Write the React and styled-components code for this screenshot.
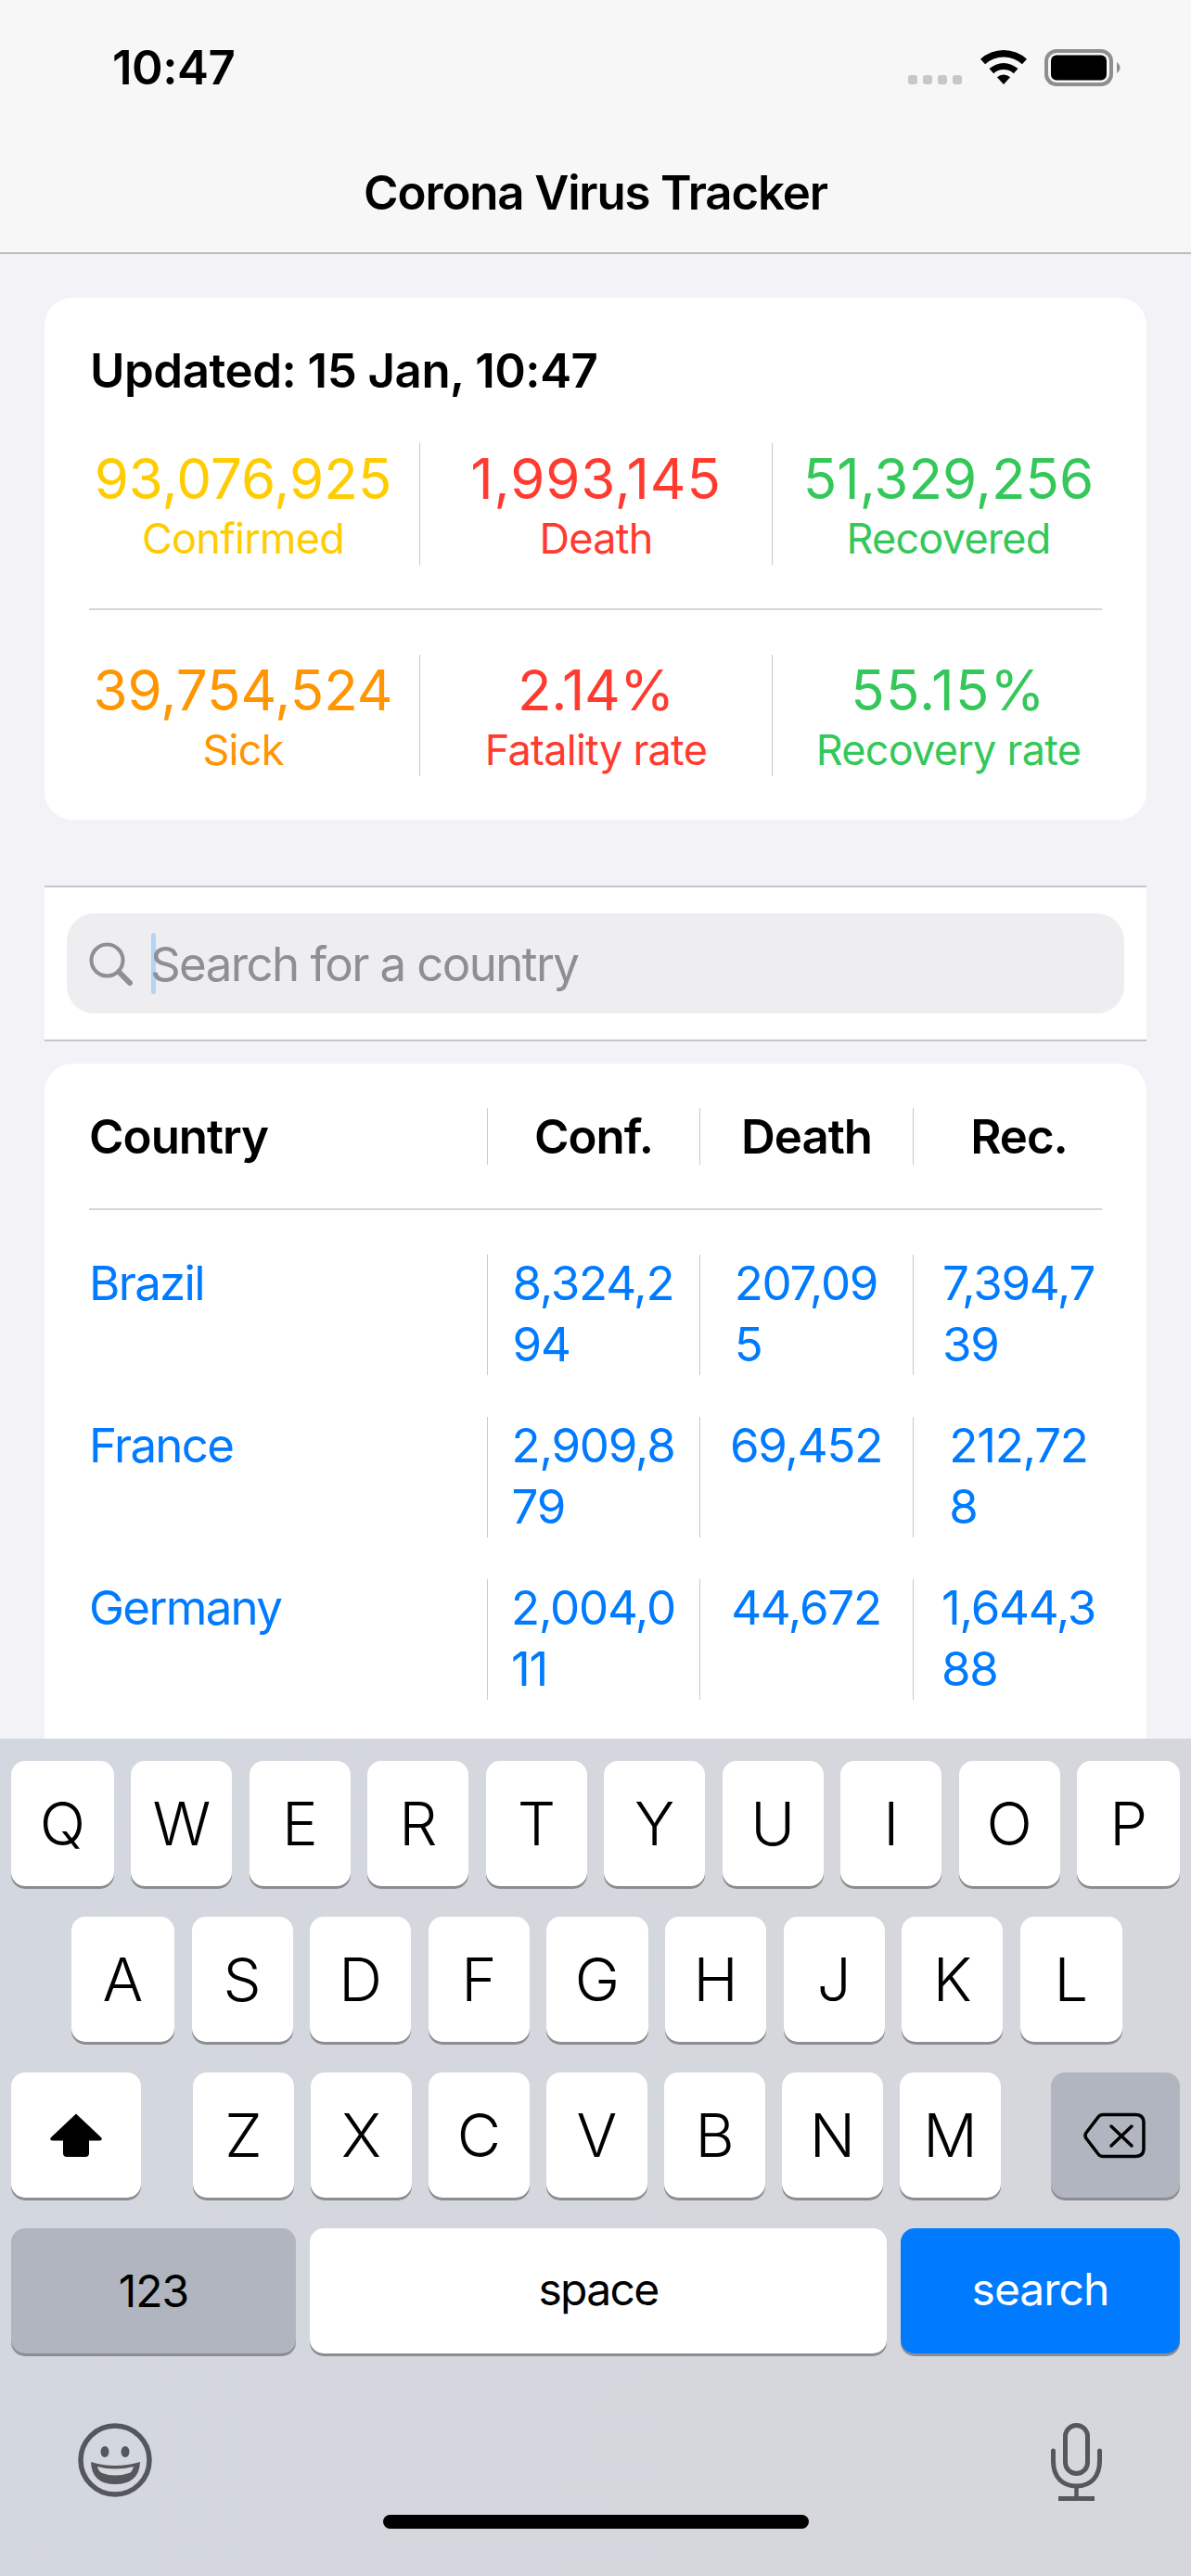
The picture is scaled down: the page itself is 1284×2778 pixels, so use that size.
import React from "react";
import styled, { createGlobalStyle } from "styled-components";

const Global = createGlobalStyle`
  html, body { margin: 0; padding: 0; background: #f2f2f7; }
  * { box-sizing: border-box; }
`;
const FONT = `Inter, "Noto Sans", "Liberation Sans", sans-serif`;

const Page = styled.div`
  width: 1284px; height: 2778px; display: flex; flex-direction: column; overflow: hidden;
  background: #f2f2f7; font-family: ${FONT}; color: #000;
`;
const NavBar = styled.header`
  flex: none; height: 274px; background: #f7f7f8; border-bottom: 2px solid #bcbcbe; display: flex; flex-direction: column;
`;
const StatusBar = styled.div`
  height: 144px; padding: 46px 76px 0 121px; display: flex; justify-content: space-between; align-items: flex-start;
`;
const Time = styled.div`
  font-size: 51px; line-height: 54px; font-weight: 600; letter-spacing: -0.5px;
`;
const StatusIcons = styled.div`
  display: flex; align-items: flex-start; margin-top: 7px;
`;
const Dots = styled.div`
  display: flex; gap: 6px; margin: 28px 20px 0 0;
`;
const Dot = styled.span`
  width: 10px; height: 10px; border-radius: 3px; background: #c7c7c7;
`;
const Title = styled.h1`
  margin: 0; font-size: 51px; line-height: 62px; font-weight: 600; text-align: center; letter-spacing: -1.15px; padding-top: 33px;
`;
const Content = styled.main`
  flex: 1; min-height: 0; overflow: hidden; padding: 47px 48px 0; display: flex; flex-direction: column;
`;
const Card = styled.section`
  flex: none; background: #fff; border-radius: 30px; padding: 48px 24px;
`;
const Updated = styled.div`
  font-size: 51px; line-height: 61px; font-weight: 600; padding-left: 25px; margin-bottom: 48px; letter-spacing: -0.5px;
`;
const StatsRow = styled.div`
  display: grid; grid-template-columns: repeat(3, 380px); height: 130px;
`;
const Stat = styled.div`
  text-align: center; color: ${(p) => p.$color}; padding-top: 1px;
  & + & { border-left: 1px solid #c9c9cc; }
`;
const StatValue = styled.div`
  font-size: 60px; line-height: 74px; font-weight: 400; letter-spacing: ${(p) => p.$ls || 0}px;
`;
const StatLabel = styled.div`
  font-size: 45px; line-height: 56px; letter-spacing: -0.75px;
`;
const Separator = styled.hr`
  margin: 48px 24px; border: 0; height: 2px; background: #d6d6d9;
`;
const SearchSection = styled.section`
  flex: none; margin-top: 71px; height: 168px; background: #fff;
  border-top: 2px solid #c6c6c9; border-bottom: 2px solid #c6c6c9; padding: 28px 24px;
`;
const SearchField = styled.div`
  height: 108px; border-radius: 30px; background: #eeeef0; display: flex; align-items: center; padding-left: 24px;
`;
const Caret = styled.span`
  width: 5px; height: 66px; margin: 0 -6px 0 20px; background: #b2d4f9; border-radius: 2px;
`;
const Placeholder = styled.span`
  font-size: 51px; line-height: 62px; color: #8e8e93; letter-spacing: -1.6px; padding-top: 2px;
`;
const TableCard = styled.section`
  flex: 1; margin-top: 24px; background: #fff; border-radius: 30px 30px 0 0; padding: 48px 24px 0 48px;
`;
const TableRow = styled.div`
  display: grid; grid-template-columns: 429px 229px 230px 228px; margin-bottom: ${(p) => p.$gap}px;
  height: ${(p) => p.$height}px;
`;
const HeadCell = styled.div`
  font-size: 51px; line-height: 61px; font-weight: 600; letter-spacing: -1px;
  text-align: ${(p) => (p.$first ? "left" : "center")};
  ${(p) => !p.$first && "border-left: 1px solid #c9c9cc;"}
`;
const TableRule = styled.hr`
  margin: 0 24px 48px 0; border: 0; height: 2px; background: #d6d6d9;
`;
const CountryCell = styled.a`
  font-size: 51px; line-height: 66px; color: #007aff; letter-spacing: -1.7px; margin-top: -2px;
`;
const NumCell = styled.div`
  border-left: 1px solid #c9c9cc; display: flex; justify-content: center; color: #007aff;
  font-size: 51px; line-height: 66px; letter-spacing: -1.25px;
`;
const NumText = styled.div`
  margin-top: -2px; margin-left: -1px;
`;

const Keyboard = styled.section`
  flex: none; height: 903px; background: linear-gradient(100deg, #d3d7df 0%, #d6d7dc 100%); padding-top: 24px; display: flex; flex-direction: column;
`;
const KeyRow = styled.div`
  display: flex; height: 138px; margin-bottom: 30px; padding: 0 ${(p) => p.$padR || 12}px 0 ${(p) => p.$padL || 12}px;
  gap: ${(p) => p.$gap || 18}px; justify-content: space-between;
`;
const Key = styled.div`
  flex: ${(p) => (p.$w ? `0 0 ${p.$w}px` : "1 1 0")}; height: 135px; border-radius: 15px;
  background: ${(p) => p.$bg || "#fff"}; color: ${(p) => p.$fg || "#000"};
  box-shadow: 0 3px 0 #8c8d91; display: flex; align-items: center; justify-content: center;
  padding-bottom: ${(p) => p.$lift || 0}px;
  font-size: ${(p) => p.$size || 65}px; font-weight: ${(p) => p.$weight || 300}; letter-spacing: ${(p) => p.$ls || 0}px;
`;
const Letters = styled.div`
  flex: 0 0 871px; display: flex; gap: 18px; margin-left: 2px;
`;
const BottomRow = styled.div`
  display: flex; justify-content: space-between; align-items: flex-start; padding: 42px 96px 0 84px; height: 121px;
`;
const HomeBar = styled.div`
  width: 459px; height: 15px; border-radius: 8px; background: #000; margin: 20px auto 0;
`;
const BottomArea = styled.div`
  flex: 1; display: flex; flex-direction: column;
`;

const Wifi = () => (
  <svg width="50" height="37" viewBox="0 0 50 37" style={{ marginRight: 19, marginTop: 1 }}>
    <path d="M0 9.8A37 37 0 0 1 50 9.8L44.9 15.3A29.5 29.5 0 0 0 5.1 15.3Z" />
    <path d="M9.5 20.1A23 23 0 0 1 40.5 20.1L35.8 25.2A16 16 0 0 0 14.2 25.2Z" />
    <path d="M17.9 29.3A10.5 10.5 0 0 1 32.1 29.3L25 37Z" />
  </svg>
);
const Battery = () => (
  <svg width="82" height="40" viewBox="0 0 82 40">
    <rect x="2" y="2" width="70" height="36" rx="11" fill="none" stroke="#8e8e8e" strokeWidth="4" />
    <rect x="7" y="6.500" width="60" height="27" rx="6" fill="#000" />
    <path d="M78 14 C80.500 16 81.500 18 81.500 20 C81.500 22 80.500 24 78 26Z" fill="#8e8e8e" />
  </svg>
);
const SearchGlyph = () => (
  <svg width="47" height="47" viewBox="0 0 47 47" fill="none" stroke="#8e8e93">
    <circle cx="19.500" cy="19.500" r="17" strokeWidth="4" />
    <path d="M32 32L44 44" strokeWidth="6" strokeLinecap="round" />
  </svg>
);
const ShiftGlyph = () => (
  <svg width="58" height="49" viewBox="0 0 58 49">
    <path d="M29 1.500 L56 27 Q58.500 30.500 54 30.500 H43 V44 Q43 48 39 48 H19 Q15 48 15 44 V30.500 H4 Q-.5 30.500 2 27Z" />
  </svg>
);
const DeleteGlyph = () => (
  <svg width="67" height="50" viewBox="0 0 67 50" fill="none" stroke="#000" strokeWidth="3.500" style={{ marginLeft: -3 }}>
    <path d="M21 2.500H56Q65 2.500 65 11V39Q65 47.500 56 47.500H21Q18 47.500 16 45L3 28Q1 25 3 22L16 5Q18 2.500 21 2.500Z" strokeLinejoin="round" />
    <path d="M30 15L52 36M52 15L30 36" strokeLinecap="round" />
  </svg>
);
const EmojiGlyph = () => (
  <svg width="80" height="80" viewBox="0 0 80 80" style={{ display: "block" }}>
    <circle cx="40" cy="40" r="37" fill="none" stroke="#54575d" strokeWidth="5.500" />
    <ellipse cx="29" cy="31" rx="4.500" ry="6" fill="#54575d" />
    <ellipse cx="51" cy="31" rx="4.500" ry="6" fill="#54575d" />
    <path d="M14 42 Q40 50 67 42 Q66 66 40 66 Q15 66 14 42Z" fill="#54575d" />
    <path d="M21 47 Q40 52 60 47 Q58 54 55 54 Q40 59 26 54 Q22 52 21 47Z" fill="#d5d7dd" />
  </svg>
);
const MicGlyph = () => (
  <svg width="55" height="84" viewBox="0 0 55 84" fill="none" stroke="#54575d" style={{ display: "block" }}>
    <rect x="15.500" y="2.500" width="24" height="52" rx="12" strokeWidth="5" />
    <path d="M2.500 30V41C2.500 58 12 68 27.500 68S52.500 58 52.500 41V30" strokeWidth="5" strokeLinecap="round" />
    <path d="M27.500 68V80" strokeWidth="4.500" />
    <path d="M8 81.500H47" strokeWidth="5" />
  </svg>
);

const stats = [
  [["93,076,925", "Confirmed", "#ffcc00"], ["1,993,145", "Death", "#ff3b30", 0.8], ["51,329,256", "Recovered", "#34c759"]],
  [["39,754,524", "Sick", "#ff9500"], ["2.14%", "Fatality rate", "#ff3b30", -0.4], ["55.15%", "Recovery rate", "#34c759", 1.2]],
];
const rows = [
  ["Brazil", ["8,324,2", "94"], ["207,09", "5"], ["7,394,7", "39"]],
  ["France", ["2,909,8", "79"], ["69,452"], ["212,72", "8"]],
  ["Germany", ["2,004,0", "11"], ["44,672"], ["1,644,3", "88"]],
];
const StatRow = ({ items }) => (
  <StatsRow>
    {items.map(([v, l, c, ls]) => (
      <Stat key={l} $color={c}>
        <StatValue $ls={ls}>{v}</StatValue>
        <StatLabel>{l}</StatLabel>
      </Stat>
    ))}
  </StatsRow>
);
const edgeKeys = { Q: 111, P: 111, A: 111, L: 110 };

const LetterKeys = ({ letters }) =>
  letters.split("").map((c) => <Key key={c} $w={edgeKeys[c]}>{c}</Key>);

export default function App() {
  return (
    <Page>
      <Global />
      <NavBar>
        <StatusBar>
          <Time>10:47</Time>
          <StatusIcons>
            <Dots><Dot /><Dot /><Dot /><Dot /></Dots>
            <Wifi />
            <Battery />
          </StatusIcons>
        </StatusBar>
        <Title>Corona Virus Tracker</Title>
      </NavBar>
      <Content>
        <Card>
          <Updated>Updated: 15 Jan, 10:47</Updated>
          <StatRow items={stats[0]} />
          <Separator />
          <StatRow items={stats[1]} />
        </Card>
        <SearchSection>
          <SearchField>
            <SearchGlyph />
            <Caret />
            <Placeholder>Search for a country</Placeholder>
          </SearchField>
        </SearchSection>
        <TableCard>
          <TableRow $height={61} $gap={47}>
            <HeadCell $first>Country</HeadCell>
            <HeadCell>Conf.</HeadCell>
            <HeadCell>Death</HeadCell>
            <HeadCell>Rec.</HeadCell>
          </TableRow>
          <TableRule />
          {rows.map(([name, ...nums]) => (
            <TableRow key={name} $height={126} $gap={49}>
              <CountryCell>{name}</CountryCell>
              {nums.map((lines, i) => (
                <NumCell key={i}>
                  <NumText>
                    {lines.map((l, j) => (
                      <div key={j}>{l}</div>
                    ))}
                  </NumText>
                </NumCell>
              ))}
            </TableRow>
          ))}
        </TableCard>
      </Content>
      <Keyboard>
        <KeyRow $gap={18.3}><LetterKeys letters="QWERTYUIOP" /></KeyRow>
        <KeyRow $padL={77} $padR={74} $gap={18.6}><LetterKeys letters="ASDFGHJKL" /></KeyRow>
        <KeyRow>
          <Key $w={140}><ShiftGlyph /></Key>
          <Letters><LetterKeys letters="ZXCVBNM" /></Letters>
          <Key $w={139} $bg="#b0b5c0"><DeleteGlyph /></Key>
        </KeyRow>
        <KeyRow $gap={15}>
          <Key $w={307} $bg="#b0b5c0" $size={48} $weight={400} $ls={-1}>123</Key>
          <Key $w={622} $size={48} $weight={400} $ls={-1.7} $lift={5}>space</Key>
          <Key $w={301} $bg="#007aff" $fg="#fff" $size={48} $weight={400} $ls={-1} $lift={5}>search</Key>
        </KeyRow>
        <BottomArea>
          <BottomRow>
            <EmojiGlyph />
            <MicGlyph />
          </BottomRow>
          <HomeBar />
        </BottomArea>
      </Keyboard>
    </Page>
  );
}
